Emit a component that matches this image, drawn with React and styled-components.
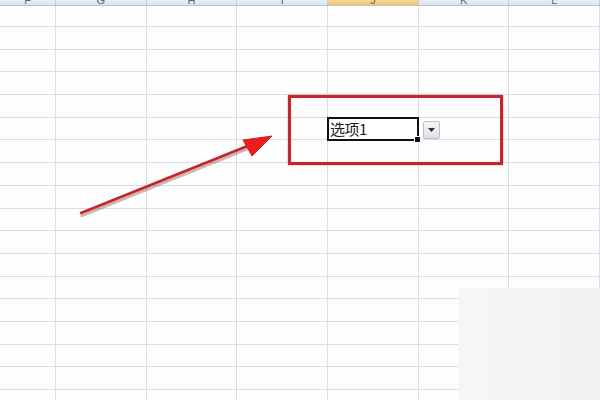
import React from "react";
import styled, { createGlobalStyle } from "styled-components";

const GlobalStyle = createGlobalStyle`
  html, body { margin: 0; padding: 0; background: #ffffff; }
  body { font-family: "Noto Sans CJK SC", "Liberation Sans", sans-serif; }
`;

const COLS = ["F", "G", "H", "I", "J", "K", "L"];
const ROWS = 17;

const Page = styled.div`
  position: relative;
  width: 600px;
  height: 400px;
  overflow: hidden;
  background: #fefefe;
`;

const Header = styled.div`
  display: grid;
  grid-template-columns: 56px repeat(6, 90.7px);
  height: 5px;
  border-bottom: 1px solid #b7c3d3;
  background: linear-gradient(#e9eef5, #d9e2ee);
  overflow: hidden;
`;

const HeadCell = styled.div`
  border-right: 1px solid #c4ceda;
  background: ${(p) => (p.$active ? "linear-gradient(#f9d99a, #f2c064)" : "transparent")};
  font: 11px "Liberation Sans", sans-serif;
  color: #5a6878;
  text-align: center;
  line-height: 0;
`;

const Grid = styled.div`
  display: grid;
  grid-template-columns: 56px repeat(6, 90.7px);
  grid-template-rows: 21px repeat(${ROWS}, 22.7px);
`;

const Cell = styled.div`
  border-right: 1px solid #dadfe5;
  border-bottom: 1px solid #dadfe5;
`;

const Callout = styled.div`
  position: absolute;
  left: 288px;
  top: 95px;
  box-sizing: border-box;
  width: 215px;
  height: 70px;
  padding: 19px 0 0 36px;
  border: 3px solid #c1272d;
  box-shadow: 0 0 2px rgba(193, 39, 45, 0.5), inset 0 0 1px rgba(193, 39, 45, 0.4);
  display: flex;
  align-items: flex-start;
  gap: 4px;
`;

const ComboField = styled.div`
  position: relative;
  box-sizing: border-box;
  width: 92px;
  height: 24px;
  border: 2px solid #111111;
  background: #ffffff;
  font-size: 15px;
  line-height: 20px;
  color: #1a1a1a;
  padding-left: 1px;
  letter-spacing: -0.5px;
`;

const FillHandle = styled.span`
  position: absolute;
  right: -4px;
  bottom: -4px;
  width: 5px;
  height: 5px;
  background: #111111;
  border: 1px solid #ffffff;
`;

const DropButton = styled.div`
  box-sizing: border-box;
  width: 17px;
  height: 18px;
  margin-top: 4px;
  border: 1px solid #b9c1cb;
  border-radius: 2px;
  background: linear-gradient(#f4f6f8, #dde2e8);
  display: flex;
  align-items: center;
  justify-content: center;
`;

const Arrow = styled.svg`
  position: absolute;
  left: 0;
  top: 0;
  pointer-events: none;
`;

const Corner = styled.div`
  position: absolute;
  right: 0;
  bottom: 0;
  width: 142px;
  height: 112px;
  background: linear-gradient(90deg, #f5f6f6, #f3f4f4 55%, #f0f1f1);
`;

export default function App() {
  const cells = [];
  for (let r = 0; r <= ROWS; r++) {
    for (let c = 0; c < 7; c++) cells.push(<Cell key={`${r}-${c}`} />);
  }
  return (
    <Page>
      <GlobalStyle />
      <Header>
        {COLS.map((c, i) => (
          <HeadCell key={c} $active={i === 4}>
            {c}
          </HeadCell>
        ))}
      </Header>
      <Grid>{cells}</Grid>

      <Callout>
        <ComboField>
          选项1
          <FillHandle />
        </ComboField>
        <DropButton>
          <svg width="7" height="4" viewBox="0 0 7 4">
            <path d="M0 0 H7 L3.5 4 Z" fill="#2a2f36" />
          </svg>
        </DropButton>
      </Callout>

      <Arrow width="600" height="400" viewBox="0 0 600 400">
        <line x1="81" y1="214" x2="252" y2="145" stroke="#5a1010" strokeOpacity="0.3" strokeWidth="3.5" strokeLinecap="round" transform="translate(1 1.5)" />
        <line x1="81" y1="213" x2="250" y2="145" stroke="#c8232a" strokeWidth="2.6" strokeLinecap="round" />
        <polygon points="272,136 243,140 252,156" fill="#ee1c1c" stroke="#c8232a" strokeWidth="1" />
      </Arrow>

      <Corner />
    </Page>
  );
}
